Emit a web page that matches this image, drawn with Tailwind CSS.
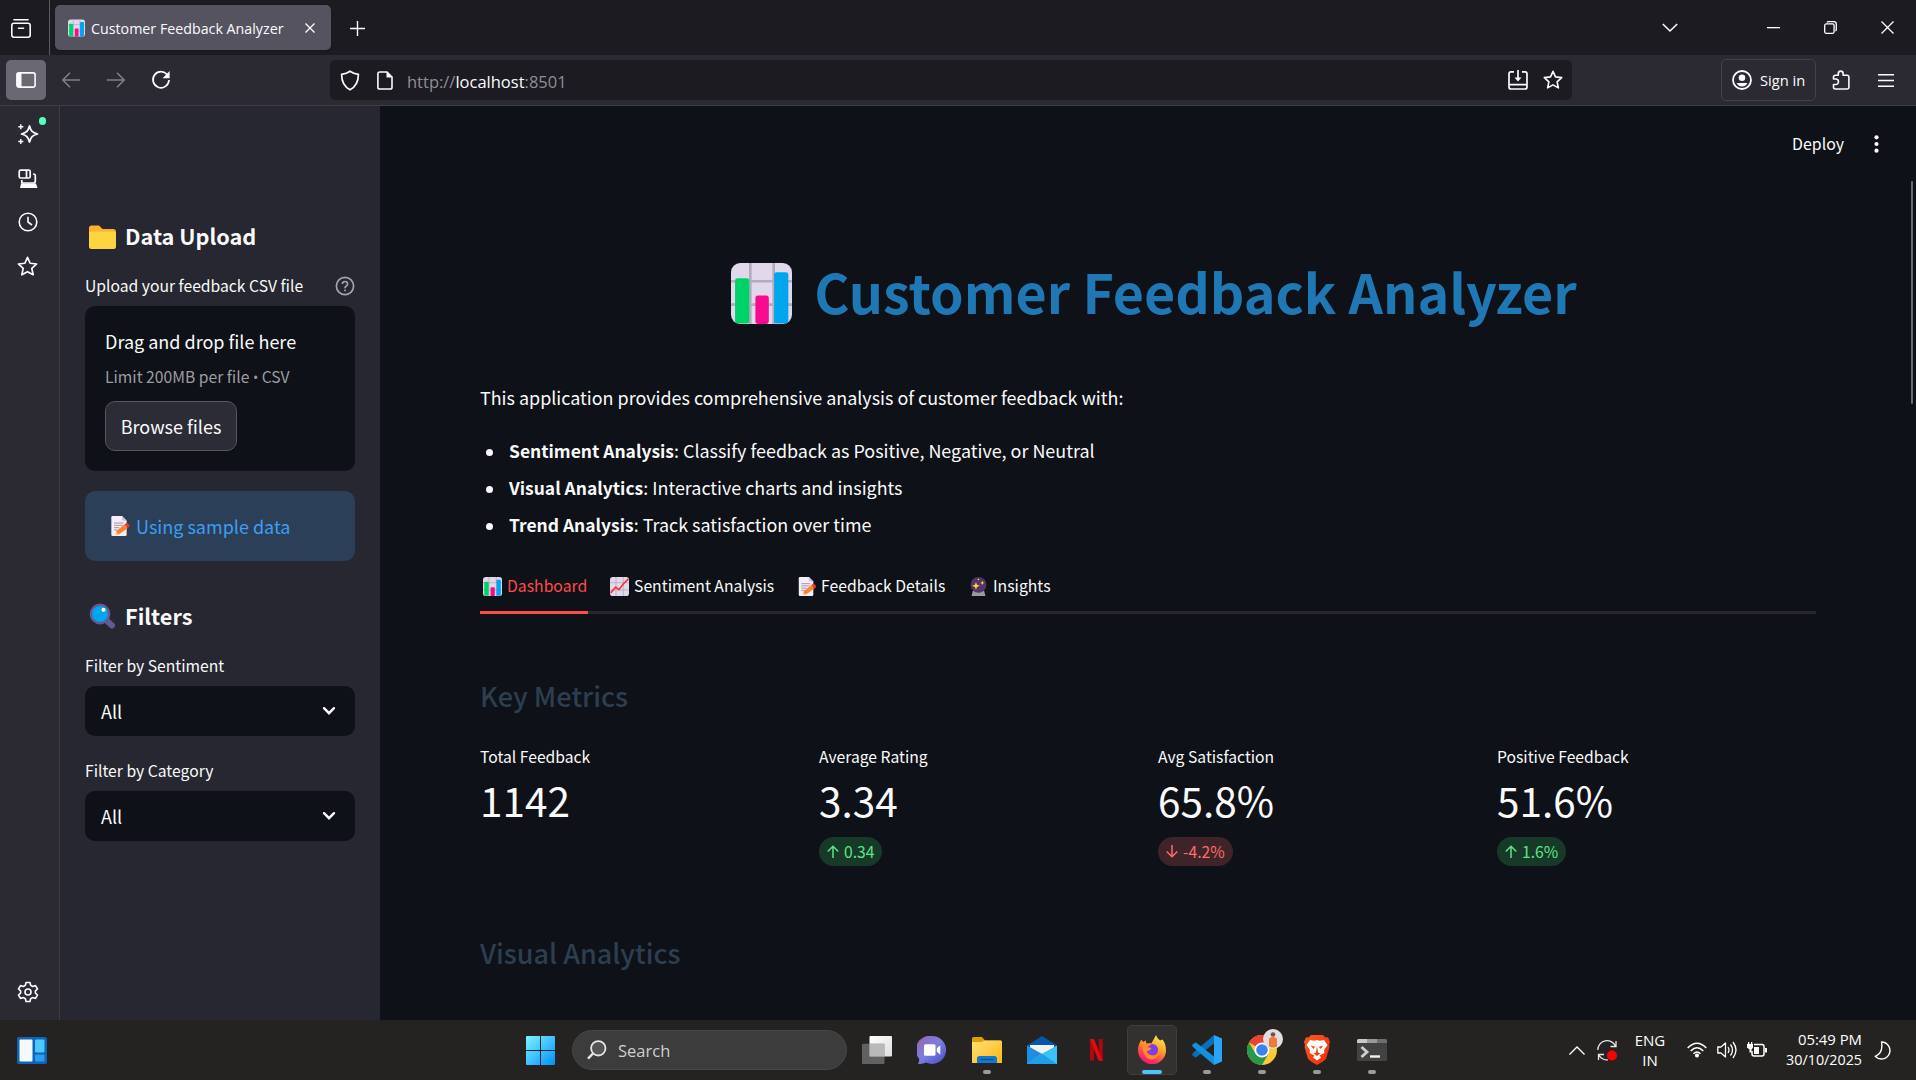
<!DOCTYPE html>
<html lang="en">
<head>
<meta charset="utf-8">
<title>Customer Feedback Analyzer</title>
<script src="https://cdn.jsdelivr.net/npm/@tailwindcss/browser@4"></script>
</head>
<body class="bg-[#0e1117]">
<svg width="0" height="0" class="absolute">
  <defs>
    <linearGradient id="gWin" x1="0" y1="0" x2="1" y2="1"><stop offset="0" stop-color="#7df3ff"/><stop offset="1" stop-color="#0091ff"/></linearGradient>
    <linearGradient id="gTv" x1="0" y1="0" x2="1" y2="1"><stop offset="0" stop-color="#fff"/><stop offset="1" stop-color="#dedede"/></linearGradient>
    <linearGradient id="gChat" x1="0" y1="0" x2="1" y2="1"><stop offset="0" stop-color="#9b63a8"/><stop offset=".5" stop-color="#7a7fe0"/><stop offset="1" stop-color="#4a48c4"/></linearGradient>
    <linearGradient id="gFold" x1="0" y1="0" x2="1" y2="1"><stop offset="0" stop-color="#ffe07a"/><stop offset="1" stop-color="#fdb813"/></linearGradient>
    <linearGradient id="gFox" x1=".8" y1="0" x2=".3" y2="1"><stop offset="0" stop-color="#fff04a"/><stop offset=".45" stop-color="#ff9a2b"/><stop offset=".75" stop-color="#ff3f50"/><stop offset="1" stop-color="#e8127f"/></linearGradient>
    <linearGradient id="gBrave" x1="0" y1="0" x2="1" y2="1"><stop offset="0" stop-color="#ff5a1f"/><stop offset="1" stop-color="#f4260a"/></linearGradient>
    <symbol id="chart" viewBox="0 0 30 30">
      <rect width="30" height="30" rx="4.5" fill="#e1d8ec"/>
      <path d="M9.5 0V30M21 0V30M0 9H30M0 20.5H30" stroke="#b4acbc" stroke-width="1.3"/>
      <rect x="2" y="7.5" width="7" height="22.3" rx="1.2" fill="#00d26a"/>
      <rect x="12" y="16" width="6.6" height="14" rx="1.2" fill="#f70a8d"/>
      <rect x="21.2" y="4.5" width="7" height="25.3" rx="1.2" fill="#00a6ed"/>
    </symbol>
    <symbol id="trend" viewBox="0 0 30 30">
      <rect width="30" height="30" rx="4.5" fill="#e1d8ec"/>
      <path d="M9.5 0V30M21 0V30M0 9H30M0 20.5H30" stroke="#b4acbc" stroke-width="1.3"/>
      <path d="M1 25l8-9 5 4 7-9 8-8" fill="none" stroke="#f8312f" stroke-width="2.6"/>
    </symbol>
    <symbol id="memo" viewBox="0 0 30 30">
      <path d="M2 2a2 2 0 0 1 2-2h14l7 7v21a2 2 0 0 1-2 2H4a2 2 0 0 1-2-2z" fill="#f3eef8"/>
      <path d="M18 0l7 7h-5a2 2 0 0 1-2-2z" fill="#cdc4d6"/>
      <path d="M6 10.500h14M6 14h13M6 17.500h8M6 21h5" stroke="#998ea4" stroke-width="1.400"/>
      <path d="M8.500 28l1.500-6 12-9.500 4.500 5.500L14.500 27z" fill="#ff822d"/>
      <path d="M22 12.500l2-1.500q2-1 4 1.200t.8 3.800l-2.300 2z" fill="#f8312f"/><path d="M8.500 28l1-4 3 3.200z" fill="#ffce7c"/>
    </symbol>
    <symbol id="ball" viewBox="0 0 30 30">
      <path d="M6 22h18l2 8H4z" fill="#9b9b9b"/><circle cx="15" cy="12.500" r="12.500" fill="#533566"/>
      <path d="M11 8l1.600 4.400L17 14l-4.400 1.600L11 20l-1.600-4.400L5 14l4.400-1.600zM21 6l1 2.300 2.300 1-2.300 1-1 2.300-1-2.300-2.300-1 2.300-1z" fill="#fcd53f"/><circle cx="15" cy="4" r="1.300" fill="#fcd53f"/>
    </symbol>
    <symbol id="star" viewBox="0 0 20 20"><path d="M10 1.300l2.500 5.600 6.200.7-4.600 4.200 1.300 6.100L10 14.900l-5.400 3 1.300-6.100L1.300 7.600l6.200-.7z" fill="none" stroke="currentColor" stroke-width="1.600" stroke-linejoin="round"/></symbol>
    <symbol id="down" viewBox="0 0 14 10"><path d="M2 2.200l5 5 5-5" fill="none" stroke="#fafafa" stroke-width="2.400" stroke-linecap="round"/></symbol>
  </defs>
</svg>

<div class="flex h-[1080px] w-[1916px] flex-col overflow-hidden text-[#fbfbfe]">

  <!-- Tab strip -->
  <header class="flex h-[55px] shrink-0 items-center bg-[#1c1b22] font-['Open_Sans',sans-serif]">
    <div class="flex h-full w-[50px] items-center border-r border-[#5b5a63] pl-[10px]">
      <svg class="mt-[2px]" width="22" height="22" viewBox="0 0 22 22" fill="none" stroke="currentColor" stroke-width="1.600"><path d="M4 1.800h14" stroke-linecap="round"/><rect x="1.800" y="5.300" width="18.400" height="14" rx="2.200"/><path d="M8.500 10.300h5" stroke-linecap="round"/></svg>
    </div>
    <div class="ml-[5px] flex h-[45px] w-[276px] items-center rounded-[5px] bg-[#55535f] pl-[13px] shadow">
      <svg width="17" height="18"><use href="#chart"/></svg>
      <span class="ml-[6px] mt-[2px] w-[213px] whitespace-nowrap text-[14.250px]">Customer Feedback Analyzer</span>
      <svg class="ml-[1px]" width="10" height="10" viewBox="0 0 10 10" stroke="currentColor" stroke-width="1.400"><path d="M.5.5l9 9M9.500.500l-9 9"/></svg>
    </div>
    <svg class="ml-[19px] mt-[2px]" width="15" height="15" viewBox="0 0 15 15" stroke="currentColor" stroke-width="1.400"><path d="M7.500 0v15M0 7.500h15"/></svg>
    <div class="ml-auto flex items-center pr-[22px]">
      <svg width="16" height="10" viewBox="0 0 16 10" fill="none" stroke="currentColor" stroke-width="1.600"><path d="M.8 1l7.200 7 7.200-7"/></svg>
      <svg class="ml-[89px]" width="13" height="2"><rect width="13" height="1.300" fill="#fff"/></svg>
      <svg class="ml-[44px]" width="13" height="13" viewBox="0 0 13 13" fill="none" stroke="#fff" stroke-width="1.300"><rect x=".7" y="2.900" width="9.400" height="9.400" rx="1.500"/><path d="M3 1.600Q3.400.7 4.500.7h5.300q2.500 0 2.500 2.500v5.300q0 1-.9 1.500"/></svg>
      <svg class="ml-[44px]" width="13" height="13" viewBox="0 0 13 13" stroke="#fff" stroke-width="1.300"><path d="M.5.5l12 12M12.500.500l-12 12"/></svg>
    </div>
  </header>

  <!-- Navigation toolbar -->
  <div class="flex h-[51px] shrink-0 items-center border-b border-[#3e3d46] bg-[#2b2a33] font-['Open_Sans',sans-serif]">
    <div class="ml-[6px] flex h-10 w-10 items-center justify-center rounded-[5px] bg-[#6a6973]">
      <svg width="20" height="16" viewBox="0 0 20 16"><rect x=".9" y=".9" width="18.200" height="14.200" rx="2" fill="none" stroke="currentColor" stroke-width="1.600"/><path d="M1 1h4.500v14H1z" fill="currentColor"/></svg>
    </div>
    <svg class="ml-4 text-[#817f89]" width="18" height="16" viewBox="0 0 18 16" fill="none" stroke="currentColor" stroke-width="1.500"><path d="M18 8H1M8 .8L.9 8 8 15.200"/></svg>
    <svg class="ml-[27px] text-[#817f89]" width="18" height="16" viewBox="0 0 18 16" fill="none" stroke="currentColor" stroke-width="1.500"><path d="M0 8h17M10 .8L17.100 8 10 15.200"/></svg>
    <svg class="ml-[26px]" width="20" height="20" viewBox="0 0 20 20"><path d="M16.800 5.500A8 8 0 1 0 18 10" fill="none" stroke="currentColor" stroke-width="1.700"/><path d="M18.600 1v7.200h-7z" fill="currentColor"/></svg>
    <div class="ml-[159px] flex h-10 w-[1242px] items-center rounded-[5px] bg-[#1c1b22] pl-[10px] pr-[9px]">
      <svg width="20" height="21" viewBox="0 0 20 21" fill="none" stroke="currentColor" stroke-width="1.700" stroke-linejoin="round"><path d="M10 1.200C7 3.400 4 4 1.600 4.300c0 7 1.900 12.200 8.400 15.500 6.500-3.300 8.400-8.500 8.400-15.500C16 4 13 3.400 10 1.200z"/></svg>
      <svg class="ml-[17px]" width="16" height="19" viewBox="0 0 16 19"><path d="M2.500 1H10l5 5v10.200a1.800 1.800 0 0 1-1.800 1.800H2.700A1.800 1.800 0 0 1 .9 16.200V2.800A1.800 1.800 0 0 1 2.700 1z" fill="none" stroke="currentColor" stroke-width="1.600"/><path d="M9.500 1v5.500H15z" fill="currentColor"/></svg>
      <span class="ml-[14px] mt-[4px] text-[16.500px] text-[#8f8e96]">http://<span class="text-[#fbfbfe]">localhost</span>:8501</span>
      <svg class="ml-auto" width="20" height="20" viewBox="0 0 20 20" fill="none" stroke="currentColor" stroke-width="1.700"><path d="M6 1.800H3Q1 1.800 1 4v13q0 2 2 2h14q2 0 2-2V4q0-2.200-2-2.200h-3M1 14.700h18M10 0v10"/><path d="M6.500 7.500h7L10 11.500z" fill="currentColor" stroke="none"/></svg>
      <svg class="ml-[15px]" width="20" height="20"><use href="#star"/></svg>
    </div>
    <div class="ml-[149px] flex h-[42px] w-[95px] items-center rounded-[5px] border border-[#42414d] pl-[10px]">
      <svg width="20" height="20" viewBox="0 0 20 20"><circle cx="10" cy="10" r="9" fill="none" stroke="currentColor" stroke-width="1.800"/><circle cx="10" cy="7.800" r="3.300" fill="currentColor"/><path d="M4.500 13h11q-2 3.500-5.500 3.500T4.500 13z" fill="currentColor"/></svg>
      <span class="ml-2 whitespace-nowrap text-[14.700px]">Sign in</span>
    </div>
    <svg class="ml-4" width="18" height="20" viewBox="0 0 18 20" fill="none" stroke="currentColor" stroke-width="1.600" stroke-linejoin="round"><path d="M1.500 9V7q0-1.800 1.800-1.800h3V3.500a2.400 2.400 0 0 1 4.800 0v1.700h4q1.800 0 1.800 1.800v10q0 2-1.800 2H3.300q-1.800 0-1.800-2v-2.500h2.200a2.600 2.600 0 0 0 0-5.500z"/></svg>
    <svg class="ml-[28px]" width="16" height="13" viewBox="0 0 16 13" stroke="currentColor" stroke-width="1.400"><path d="M0 .8h16M0 6.500h16M0 12.200h16"/></svg>
  </div>

  <div class="flex h-[914px] shrink-0 font-['Noto_Sans_CJK_SC',sans-serif]">
    <!-- Browser side rail -->
    <nav class="flex w-[60px] flex-col items-center border-r border-[#3e3d46] bg-[#2b2a33] pr-[4px] pt-[17px]">
      <div class="relative h-[22px] w-[22px]">
        <svg width="22" height="22" viewBox="0 0 22 22" fill="none" stroke="currentColor" stroke-width="1.800" stroke-linejoin="round"><path d="M12.500 3c1.300 5 3 6.700 8 8-5 1.300-6.700 3-8 8-1.300-5-3-6.700-8-8 5-1.300 6.700-3 8-8z"/><path d="M3.800 1.200v5M1.300 3.700h5M3.800 16v5M1.300 18.500h5" stroke-width="1.400"/></svg>
        <span class="absolute -right-[7px] -top-[6px] h-2 w-[7px] rounded-full bg-[#54ffbd]"></span>
      </div>
      <svg class="mt-[24px]" width="20" height="20" viewBox="0 0 20 20" fill="none" stroke="currentColor" stroke-width="1.700"><rect x="1.200" y="1.200" width="11" height="7.800" rx="1.500"/><path d="M8.500 1v8M3.800 11v3h11.500q2 0 2-2V6.500q0-1.500-2.300-1.500"/><path d="M3 14.500h15l1.500 4.500H2z" fill="currentColor" stroke="none"/></svg>
      <svg class="mt-[23px]" width="20" height="20" viewBox="0 0 20 20" fill="none" stroke="currentColor" stroke-width="1.600"><circle cx="10" cy="10" r="8.800"/><path d="M10 4.800V10l4 3"/></svg>
      <svg class="mt-[24px]" width="21" height="21"><use href="#star"/></svg>
      <svg class="mt-auto mb-[17px]" width="22" height="22" viewBox="0 0 22 22" fill="none" stroke="currentColor" stroke-width="1.600" stroke-linejoin="round"><path d="M9 1.500h4l.6 2.800 2.200 1.200 2.700-.9 2 3.400-2.100 1.900v2.200l2.100 1.900-2 3.400-2.700-.9-2.200 1.200-.6 2.800H9l-.6-2.800-2.200-1.200-2.700.9-2-3.400 2.100-1.900V9.900L1.500 8l2-3.400 2.700.9 2.200-1.200z"/><circle cx="11" cy="11" r="3"/></svg>
    </nav>

    <!-- App sidebar -->
    <aside class="w-[320px] bg-[#262730] px-[25px] pt-[111px] text-[15.700px] text-[#fafafa]">
      <h2 class="flex h-[39px] items-center whitespace-nowrap pl-[4px] text-[21.700px] font-bold">
        <svg class="mr-[9px]" width="27" height="24" viewBox="0 0 27 24"><path d="M0 3a2.500 2.500 0 0 1 2.500-2.500H10L13.500 4H24a3 3 0 0 1 3 3v5H0z" fill="#ffb02e"/><rect y="6.500" width="27" height="17.500" rx="2.500" fill="#fcd53f"/></svg>Data Upload
      </h2>
      <div class="mt-[15px] flex h-[30px] items-center justify-between">Upload your feedback CSV file
        <svg width="20" height="20" viewBox="0 0 20 20" fill="none" stroke="#a3a4a9" stroke-width="1.700"><circle cx="10" cy="10" r="8.600"/><path d="M7.400 8q0-2.500 2.600-2.500T12.600 8q0 1.200-1.300 2T10 12.200"/><path d="M10 13.600v1.700" /></svg>
      </div>
      <div class="mt-[5px] h-[165px] rounded-[10px] bg-[#0e1117] p-5">
        <div class="h-[30px] text-[18px] leading-[30px]">Drag and drop file here</div>
        <div class="mt-[6px] h-[29px] whitespace-nowrap text-[15.700px] leading-[29px] text-[#9c9da1]">Limit 200MB per file <span class="font-['Open_Sans',sans-serif] text-[14px]">•</span> CSV</div>
        <button class="mt-[10px] flex h-[50px] w-[132px] items-center justify-center rounded-[10px] border border-[#555660] bg-[#2b2c36] text-[18px]">Browse files</button>
      </div>
      <div class="mt-5 flex h-[70px] items-center rounded-[10px] bg-[#2c3f58] pl-[25px] text-[18px] text-[#3d9df3]">
        <svg class="mr-[6px]" width="20" height="20"><use href="#memo"/></svg>Using sample data
      </div>
      <h2 class="mt-[36px] flex h-[39px] items-center pl-[4px] text-[21.700px] font-bold">
        <svg class="mr-[9px]" width="27" height="27" viewBox="0 0 27 27"><path d="M17 17l6 5.500" stroke="#635994" stroke-width="6" stroke-linecap="round"/><circle cx="11" cy="11" r="9.200" fill="#00a6ed" stroke="#635994" stroke-width="2.400"/><circle cx="14.500" cy="6.800" r="2.100" fill="#fff"/></svg>Filters
      </h2>
      <div class="mt-[15px] h-[30px] leading-[30px]">Filter by Sentiment</div>
      <div class="mt-[5px] flex h-[50px] items-center justify-between rounded-[10px] bg-[#0e1117] pl-4 pr-[19px] text-[18px]">All<svg width="14" height="10"><use href="#down"/></svg></div>
      <div class="mt-[20px] h-[30px] leading-[30px]">Filter by Category</div>
      <div class="mt-[5px] flex h-[50px] items-center justify-between rounded-[10px] bg-[#0e1117] pl-4 pr-[19px] text-[18px]">All<svg width="14" height="10"><use href="#down"/></svg></div>
    </aside>

    <!-- App main -->
    <main class="relative w-[1536px] bg-[#0e1117] px-[100px] text-[17.930px] text-[#fafafa]">
      <div class="-mr-[63px] flex h-[75px] items-center justify-end text-[15.900px]">Deploy
        <svg class="ml-[30px]" width="5" height="18" viewBox="0 0 5 18" fill="#fafafa"><circle cx="2.500" cy="2.300" r="2.100"/><circle cx="2.500" cy="9" r="2.100"/><circle cx="2.500" cy="15.700" r="2.100"/></svg>
      </div>
      <h1 class="mt-[80px] flex h-[61px] items-center justify-center whitespace-nowrap pl-[12px] text-[53.750px] font-bold text-[#1f77b4]">
        <svg class="mr-[22px] mt-[3px]" width="61" height="61"><use href="#chart"/></svg>Customer Feedback Analyzer
      </h1>
      <p class="mt-[60px] h-[30px] leading-[30px]">This application provides comprehensive analysis of customer feedback with:</p>
      <ul class="mt-5 leading-[37px]">
        <li class="flex h-[37px] items-center"><span class="ml-[6px] mr-[16px] mt-[3px] h-[7px] w-[7px] rounded-full bg-[#fafafa]"></span><b class="text-[17.450px]">Sentiment Analysis</b>: Classify feedback as Positive, Negative, or Neutral</li>
        <li class="flex h-[37px] items-center"><span class="ml-[6px] mr-[16px] mt-[3px] h-[7px] w-[7px] rounded-full bg-[#fafafa]"></span><b class="text-[17.450px]">Visual Analytics</b>: Interactive charts and insights</li>
        <li class="flex h-[37px] items-center"><span class="ml-[6px] mr-[16px] mt-[3px] h-[7px] w-[7px] rounded-full bg-[#fafafa]"></span><b class="text-[17.450px]">Trend Analysis</b>: Track satisfaction over time</li>
      </ul>
      <div class="mt-[18px] flex h-[53px] gap-5 border-b-[3px] border-[#262730] text-[15.750px]">
        <div class="flex h-[53px] w-[108px] shrink-0 items-center border-b-[3px] border-[#ff4b4b] pl-[3px] text-[#ff4b4b]"><svg class="mr-[5px]" width="19" height="19"><use href="#chart"/></svg>Dashboard</div>
        <div class="flex h-[50px] w-[168px] items-center whitespace-nowrap pl-[2px]"><svg class="mr-[5px]" width="19" height="19"><use href="#trend"/></svg>Sentiment Analysis</div>
        <div class="flex h-[50px] w-[151px] items-center whitespace-nowrap pl-px"><svg class="mr-[4px]" width="20" height="19"><use href="#memo"/></svg>Feedback Details</div>
        <div class="flex h-[50px] items-center pl-[2px]"><svg class="mr-[5px]" width="19" height="19"><use href="#ball"/></svg>Insights</div>
      </div>
      <h3 class="mt-[62px] h-10 text-[27.100px] font-medium leading-10 text-[#2c3e50]">Key Metrics</h3>
      <div class="mt-[26px] grid h-[124px] grid-cols-4 gap-5 text-[15.700px]">
        <div><div class="h-[30px] leading-[30px]">Total Feedback</div><div class="h-[56px] text-[40.500px] leading-[56px]">1142</div></div>
        <div><div class="h-[30px] leading-[30px]">Average Rating</div><div class="h-[56px] text-[40.500px] leading-[56px]">3.34</div>
          <div class="mt-[9px] inline-flex h-[29px] w-[63px] items-center rounded-full bg-[#173928] pl-2 text-[#5ce488]"><svg class="mr-[5px]" width="12" height="13" viewBox="0 0 12 13" fill="none" stroke="currentColor" stroke-width="1.500"><path d="M6 13V1.200M.7 6.500L6 1.200l5.300 5.300"/></svg>0.34</div></div>
        <div><div class="h-[30px] leading-[30px]">Avg Satisfaction</div><div class="h-[56px] text-[40.500px] leading-[56px]">65.8%</div>
          <div class="mt-[9px] inline-flex h-[29px] w-[75px] items-center rounded-full bg-[#3e2328] pl-2 text-[#ff6c6c]"><svg class="mr-[5px]" width="12" height="13" viewBox="0 0 12 13" fill="none" stroke="currentColor" stroke-width="1.500"><path d="M6 0v11.800M.7 6.500L6 11.800l5.300-5.300"/></svg>-4.2%</div></div>
        <div><div class="h-[30px] leading-[30px]">Positive Feedback</div><div class="h-[56px] text-[40.500px] leading-[56px]">51.6%</div>
          <div class="mt-[9px] inline-flex h-[29px] w-[69px] items-center rounded-full bg-[#173928] pl-2 text-[#5ce488]"><svg class="mr-[5px]" width="12" height="13" viewBox="0 0 12 13" fill="none" stroke="currentColor" stroke-width="1.500"><path d="M6 13V1.200M.7 6.500L6 1.200l5.300 5.300"/></svg>1.6%</div></div>
      </div>
      <h3 class="mt-[67px] h-10 text-[27px] font-medium leading-10 text-[#2c3e50]">Visual Analytics</h3>
      <div class="absolute right-[3px] top-[75px] h-[223px] w-[2px] rounded bg-[#6b6c70]"></div>
    </main>
  </div>

  <!-- Taskbar -->
  <footer class="flex h-[60px] shrink-0 items-center bg-[#242321] font-['Open_Sans',sans-serif]">
    <svg class="ml-[17px]" width="30" height="27" viewBox="0 0 30 27"><rect width="30" height="27" rx="2" fill="#0c66b5"/><rect x="2.500" y="2.500" width="13" height="22" rx="1" fill="#f4f9ff"/><rect x="18" y="2.500" width="9.500" height="13" rx="1" fill="#4cc8ff"/><rect x="18" y="17.500" width="9.500" height="7" rx="1" fill="#2b9df0"/></svg>
    <svg class="ml-[479px]" width="29" height="29" viewBox="0 0 29 29"><path d="M0 1a1 1 0 0 1 1-1h13v14H0zM15 0h13a1 1 0 0 1 1 1v13H15zM0 15h14v14H1a1 1 0 0 1-1-1zM15 15h14v13a1 1 0 0 1-1 1H15z" fill="url(#gWin)"/></svg>
    <div class="ml-[17px] flex h-10 w-[275px] items-center rounded-full border border-[#474747] bg-[#3c3c3c] pl-[14px]">
      <svg width="20" height="20" viewBox="0 0 20 20" fill="none" stroke="#e6e6e6" stroke-width="1.800"><circle cx="11.300" cy="8.300" r="7.200" fill="#555"/><path d="M6 13.500L1 18.700" stroke-width="2.400"/></svg>
      <span class="ml-[11px] mt-[2px] text-[16.500px] text-[#cfcfcf]">Search</span>
    </div>
    <div class="ml-[2px] flex h-[60px]">
      <div class="relative flex w-[55px] items-center justify-center"><svg width="30" height="28" viewBox="0 0 30 28"><rect x="7.500" width="22.500" height="20.500" rx="1" fill="url(#gTv)"/><rect y="7.700" width="22.500" height="20.300" rx="1" fill="#777" fill-opacity=".75"/><path d="M7.500 7.700h15v12.800h-15z" fill="#b9b9b9"/></svg></div>
      <div class="relative flex w-[55px] items-center justify-center"><svg width="30" height="28" viewBox="0 0 30 28"><path d="M15 0a14 14 0 1 1-6 26.600Q5 28.300 1 28q1.500-2.500 1.200-5A14 14 0 0 1 15 0z" fill="url(#gChat)"/><rect x="7" y="8.300" width="11.500" height="11.500" rx="1.500" fill="#fff"/><path d="M19.800 12.200l3.500-3v9.600l-3.500-3z" fill="#fff"/></svg></div>
      <div class="relative flex w-[55px] items-center justify-center"><svg width="30" height="28" viewBox="0 0 30 28"><path d="M0 2.500Q0 1 1.500 1H10l3 3.500H28.500Q30 4.500 30 6v6H0z" fill="#e0a000"/><path d="M0 6h9.500l3-1.500h16Q30 4.500 30 6v21H0z" fill="url(#gFold)"/><path d="M5 27v-4.500Q5 20 7.500 20h15q2.500 0 2.500 2.500V27z" fill="#0f7ad0"/><path d="M8.500 23.500h13" stroke="#0a4f94" stroke-width="1.200"/></svg><i class="absolute bottom-[6px] h-1 w-2 rounded-full bg-[#9a9a9a]"></i></div>
      <div class="relative flex w-[55px] items-center justify-center"><svg width="30" height="28" viewBox="0 0 30 28"><path d="M0 9.500L15 0l15 9.500v5H0z" fill="#0358a7"/><path d="M3 9h24v8l-12 6L3 17z" fill="#f2f2f2"/><path d="M0 9.500L17 19l-2 9H0z" fill="#1e8fe0"/><path d="M30 9.500L13.500 18.500 0 28h30z" fill="#3cc3f5"/><path d="M15 17.700L30 28H0z" fill="#209fe8"/></svg></div>
      <div class="relative flex w-[55px] items-center justify-center"><svg width="13" height="22" viewBox="0 0 13 22"><path d="M0 0h4v21.500L0 22zM8.700 0h4v22l-4-.5z" fill="#b1060f"/><path d="M0 0h4l8.700 22-4.200-.5z" fill="#e50914"/></svg></div>
      <div class="relative flex w-[55px] items-center justify-center"><div class="flex h-[50px] w-[50px] items-center justify-center rounded-[5px] border border-[#3f3e3c] bg-[#33312f]"><svg class="-mt-[2px]" width="28" height="29" viewBox="0 0 28 29"><path d="M18 0q1 3.500 4 5.500l2.500-1Q28 9 28 15A14 14 0 0 1 0 15.500Q0 9.500 3.500 4.500L5 7l3-1.500v3L13 9q3-5 5-9z" fill="url(#gFox)"/><circle cx="14.300" cy="14.800" r="5.800" fill="#7b3fe4"/><path d="M4 9l10-1q-2 3-5 4l4.500 1q-1 3-5 3 2 4.500 7 4.500 4 0 6-4-1 7.500-8 8Q5 24 4 9z" fill="#ff8a26"/></svg></div><i class="absolute bottom-[6px] h-1 w-5 rounded-full bg-[#4cc2ff]"></i></div>
      <div class="relative flex w-[55px] items-center justify-center"><svg width="30" height="30" viewBox="0 0 30 30"><path d="M22 0l8 3.500v23L22 30z" fill="#2aa5f5"/><path d="M22 0v8.500L4 22.500 1 21q-1.500-1.700 0-3z" fill="#0a6fb8"/><path d="M22 30v-8.500L4 7.500 1 9q-1.500 1.700 0 3z" fill="#1490df"/></svg><i class="absolute bottom-[6px] h-1 w-2 rounded-full bg-[#9a9a9a]"></i></div>
      <div class="relative flex w-[55px] items-center justify-center"><svg width="30" height="30" viewBox="0 0 30 30"><circle cx="15" cy="15" r="15" fill="#fcc934"/><path d="M15 15L2 7.500A15 15 0 0 1 28 7.500L27.500 8H15z" fill="#ea4335"/><path d="M2 7.500A15 15 0 0 0 15 30l6.500-11.300L15 15 8.500 18.700z" fill="#269a4a"/><circle cx="15" cy="15" r="7.500" fill="#fff"/><circle cx="15" cy="15" r="5.800" fill="#3b82f0"/></svg><svg class="absolute left-[29px] top-[9px]" width="20" height="20" viewBox="0 0 20 20"><circle cx="10" cy="10" r="10" fill="#dedfe0"/><path d="M6 17.500V11q0-3 4-3t4 3v6.500q-4 2-8 0z" fill="#f0793a"/><circle cx="10" cy="5.500" r="2.300" fill="#8a4a30"/></svg><i class="absolute bottom-[6px] h-1 w-2 rounded-full bg-[#9a9a9a]"></i></div>
      <div class="relative flex w-[55px] items-center justify-center"><svg width="26" height="30" viewBox="0 0 26 30"><path d="M7 0h12l2.500 2.500 2.500-.3L26 7l-1 3 .5 2-3.500 12q-3 3-9 6-6-3-9-6L.5 12l.5-2-1-3 2-4.800 2.500.3z" fill="url(#gBrave)"/><path d="M6 5l4 .8 3-.8 3 .8 4-.8 3.500 5-3.500 5 .5 3-5 2.500 1.500 2-4 3-4-3 1.500-2-5-2.500.5-3-3.500-5z" fill="#fff"/><path d="M6.500 10.500l4.500 1.200-1.300 2.300zM19.500 10.500L15 11.700l1.300 2.300zM13 11l1 6.500 2.500 1L13 21l-3.500-2.500 2.500-1z" fill="#f4400f"/></svg><i class="absolute bottom-[6px] h-1 w-2 rounded-full bg-[#9a9a9a]"></i></div>
      <div class="relative flex w-[55px] items-center justify-center"><svg width="30" height="22" viewBox="0 0 30 22"><rect width="30" height="22" rx="1.500" fill="#424242"/><path d="M0 4V1.500Q0 0 1.500 0H10v4z" fill="#c8c8c8"/><path d="M10 0h10v4H10z" fill="#999"/><path d="M20 0h8.500Q30 0 30 1.500V4H20z" fill="#6e6e6e"/><path d="M4.500 8l5.500 5-5.500 5" fill="none" stroke="#d0d0d0" stroke-width="2.800"/><path d="M13 17.500h10" stroke="#f2f2f2" stroke-width="2.400"/></svg><i class="absolute bottom-[6px] h-1 w-2 rounded-full bg-[#9a9a9a]"></i></div>
    </div>
    <div class="ml-auto flex items-center pr-[25px] text-white">
      <svg width="16" height="9" viewBox="0 0 16 9" fill="none" stroke="currentColor" stroke-width="1.300"><path d="M.5 8.500L8 1l7.500 7.500"/></svg>
      <svg class="ml-3" width="21" height="21" viewBox="0 0 21 21" fill="none" stroke="#e8e8e8" stroke-width="1.300"><path d="M.8 10A9.300 9.300 0 0 1 18.500 6M19 1v5.500h-5.500M1.500 20v-5.500H7M1.800 15q3 5 9 5"/><circle cx="15" cy="15.500" r="5" fill="#f00" stroke="none"/></svg>
      <div class="ml-3 w-10 text-center text-[15px] leading-5">ENG<br>IN</div>
      <svg class="ml-[17px]" width="20" height="16" viewBox="0 0 20 16" fill="none" stroke="currentColor" stroke-width="1.500"><path d="M.7 6Q10-3.500 19.300 6M3.700 9Q10 2.500 16.300 9M6.500 11.800q3.500-3.500 7 0"/><circle cx="10" cy="13.500" r="1.300" fill="currentColor"/></svg>
      <svg class="ml-[10px]" width="20" height="18" viewBox="0 0 20 18" fill="none" stroke="currentColor" stroke-width="1.300" stroke-linejoin="round"><path d="M.8 6H4l4.500-4v14L4 12H.8zM11 6q2 3 0 6M13.500 3.500q4 5.500 0 11M16 1q6 8 0 16"/></svg>
      <svg class="ml-[10px]" width="20" height="16" viewBox="0 0 20 16"><path d="M7 2.500h8q2 0 2 2v7.500q0 2-2 2H7q-2 0-2-2V9" fill="none" stroke="currentColor" stroke-width="1.500"/><path d="M7 5h5v7H7zM18 6h2v4.500h-2zM0 2h6v3.500L4.500 7.500v3h-2v-3L0 5.500zM1 0h1.300v3H1zM4 0h1.300v3H4z" fill="currentColor"/></svg>
      <div class="w-[95px] whitespace-nowrap pb-[2px] text-right text-[14.300px] leading-5"><span class="text-[14.860px]">05:49 PM</span><br>30/10/2025</div>
      <svg class="ml-[12px]" width="17" height="19" viewBox="0 0 17 19" fill="none" stroke="currentColor" stroke-width="1.400" stroke-linejoin="round"><path d="M7.500 1a8.500 8.500 0 1 1-6.300 14.300Q9.500 12 7.500 1z"/></svg>
    </div>
  </footer>
</div>
</body>
</html>
